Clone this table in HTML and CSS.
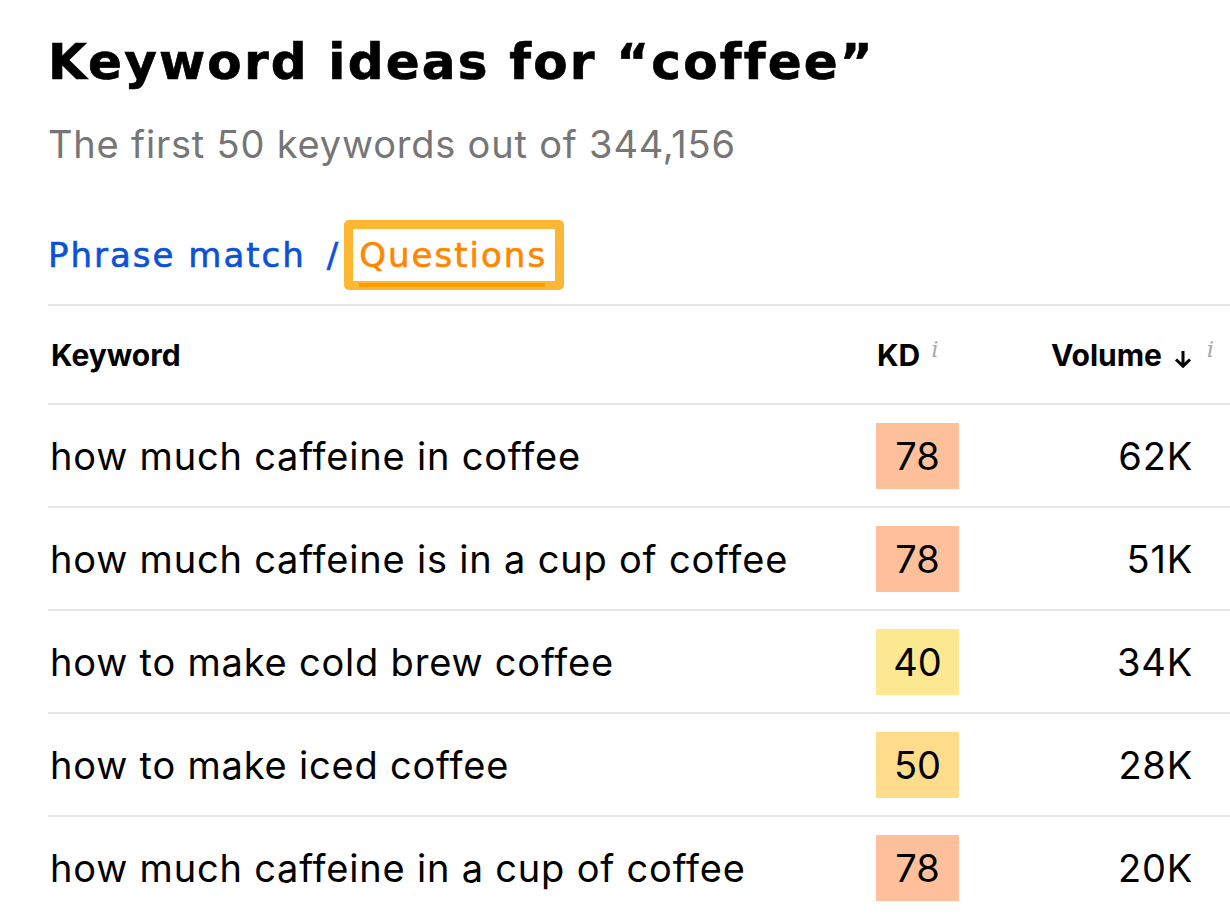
FILE: index.html
```html
<!DOCTYPE html>
<html lang="en">
<head>
<meta charset="utf-8">
<title>Keyword ideas for “coffee”</title>
<link rel="stylesheet" href="styles.css">
</head>
<body>
<div class="page">
  <h1 class="title">Keyword ideas for “coffee”</h1>
  <p class="subtitle">The first 50 keywords out of 344,156</p>
  <div class="tabs">
    <a class="tab">Phrase match</a>
    <span class="sep">/</span>
    <span class="highlight"><a class="tab tab-active">Questions</a></span>
  </div>
  <div class="table">
    <div class="row head">
      <div class="cell kw">Keyword</div>
      <div class="cell kd">KD<sup class="info">i</sup></div>
      <div class="cell vol">Volume<svg class="arrow" viewBox="0 0 20 18" width="20" height="18"><path d="M10 1V16M3 9.5L10 16.2L17 9.5" fill="none" stroke="#000" stroke-width="3"/></svg><sup class="info info-vol">i</sup></div>
    </div>
    <div class="row">
      <div class="cell kw">how much caffeine in coffee</div>
      <div class="cell kd"><span class="badge hard">78</span></div>
      <div class="cell vol">62K</div>
    </div>
    <div class="row">
      <div class="cell kw">how much caffeine is in a cup of coffee</div>
      <div class="cell kd"><span class="badge hard">78</span></div>
      <div class="cell vol">51K</div>
    </div>
    <div class="row">
      <div class="cell kw">how to make cold brew coffee</div>
      <div class="cell kd"><span class="badge easy">40</span></div>
      <div class="cell vol">34K</div>
    </div>
    <div class="row">
      <div class="cell kw">how to make iced coffee</div>
      <div class="cell kd"><span class="badge medium">50</span></div>
      <div class="cell vol">28K</div>
    </div>
    <div class="row">
      <div class="cell kw">how much caffeine in a cup of coffee</div>
      <div class="cell kd"><span class="badge hard">78</span></div>
      <div class="cell vol">20K</div>
    </div>
  </div>
</div>
</body>
</html>
```
FILE: styles.css
```css
* { box-sizing: border-box; }
html, body { margin: 0; padding: 0; background: #fff; }
body {
  font-family: Inter, "Noto Sans", sans-serif;
  color: #000;
  overflow: hidden;
}
.page {
  padding: 34px 0 0 48px;
}
.title {
  margin: 0;
  font-family: "DejaVu Sans", Inter, sans-serif;
  font-size: 50px;
  line-height: 56px;
  font-weight: 700;
  letter-spacing: 2.2px;
  -webkit-text-stroke: 0.7px #000;
}
.subtitle {
  margin: 32px 0 0;
  font-size: 38px;
  line-height: 44px;
  letter-spacing: 0.8px;
  color: #767676;
  font-weight: 400;
}
.tabs {
  margin-top: 54px;
  display: flex;
  align-items: center;
  height: 70px;
}
.tab {
  font-family: "DejaVu Sans", Inter, sans-serif;
  font-size: 34px;
  line-height: 52px;
  font-weight: 400;
  letter-spacing: 2px;
  color: #0b52d8;
  -webkit-text-stroke: 0.6px currentColor;
}
.sep {
  font-family: "DejaVu Sans", Inter, sans-serif;
  font-size: 34px;
  line-height: 52px;
  color: #0b52d8;
  -webkit-text-stroke: 0.6px currentColor;
  margin: 0 6px 0 21px;
}
.highlight {
  position: relative;
  border: 9px solid #feb733;
  border-radius: 5px;
  padding: 0 8px 0 6px;
  display: inline-flex;
}
.tab-active {
  color: #ff8700;
  position: relative;
}
.tab-active::after {
  content: "";
  position: absolute;
  left: 0;
  right: 2px;
  bottom: -6px;
  height: 4px;
  background: #ff9d00;
}
.table {
  margin-top: 14px;
  border-top: 2px solid #e6e6e6;
}
.row {
  display: grid;
  grid-template-columns: 1fr 83px 234px;
  padding-right: 37px;
  align-items: center;
  border-bottom: 2px solid #e6e6e6;
  height: 103px;
}
.row.head {
  height: 99px;
}
.cell.kw {
  font-size: 38px;
  letter-spacing: 0.8px;
  padding-left: 2px;
}
.cell.vol {
  font-size: 38px;
  letter-spacing: 0.8px;
  text-align: right;
}
.head .cell.kw,
.head .cell.kd,
.head .cell.vol {
  font-size: 30px;
  font-weight: 700;
  letter-spacing: 0;
  display: flex;
  align-items: center;
}
.head .cell.kw { padding-left: 3px; }
.head .cell.kd { padding-left: 1px; }
.head .cell.vol { justify-content: flex-end; position: relative; }
.info {
  font-family: "DejaVu Serif", serif;
  font-style: italic;
  font-weight: 400;
  color: #aaaaaa;
  font-size: 23px;
  line-height: 1;
  align-self: flex-start;
  margin-left: 11px;
  margin-top: 1px;
}
.head .info-vol {
  position: absolute;
  right: -21px;
  top: 1px;
  margin: 0;
}
.arrow {
  margin-left: 11px;
  margin-top: 8px;
}
.badge {
  display: flex;
  align-items: center;
  justify-content: center;
  width: 83px;
  height: 66px;
  font-size: 38px;
}
.badge.hard { background: #fec09b; }
.badge.easy { background: #fce891; }
.badge.medium { background: #ffdb8c; }
```
